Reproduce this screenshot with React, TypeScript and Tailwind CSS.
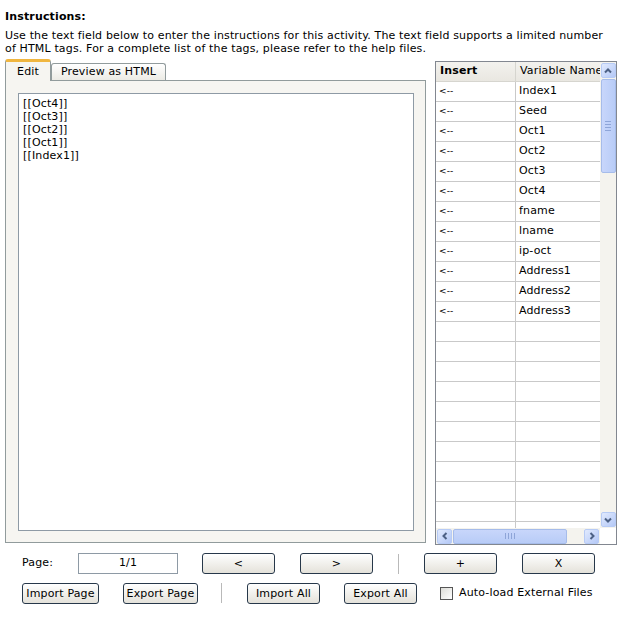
import React from 'react';

const variables = [
  'Index1',
  'Seed',
  'Oct1',
  'Oct2',
  'Oct3',
  'Oct4',
  'fname',
  'lname',
  'ip-oct',
  'Address1',
  'Address2',
  'Address3',
];

const editorLines = ['[[Oct4]]', '[[Oct3]]', '[[Oct2]]', '[[Oct1]]', '[[Index1]]'];

function Chevron({ dir }: { dir: 'up' | 'down' | 'left' | 'right' }) {
  const paths: Record<string, string> = {
    up: 'M2 6.5 L5 3.5 L8 6.5',
    down: 'M2 3.5 L5 6.5 L8 3.5',
    left: 'M6.5 2 L3.5 5 L6.5 8',
    right: 'M3.5 2 L6.5 5 L3.5 8',
  };
  return (
    <svg width="10" height="10" viewBox="0 0 10 10">
      <path d={paths[dir]} fill="none" stroke="#4d6185" strokeWidth={2} />
    </svg>
  );
}

function ScrollArrow({ dir }: { dir: 'up' | 'down' | 'left' | 'right' }) {
  return (
    <div className="w-[15px] h-[15px] flex items-center justify-center rounded-[2px] border border-[#b7cbf5] bg-gradient-to-br from-[#e1eafe] to-[#b4c8f6]">
      <Chevron dir={dir} />
    </div>
  );
}

function Button({ label, width }: { label: string; width: string }) {
  return (
    <button
      className={`${width} h-[21px] flex items-center justify-center rounded-[3px] border border-[#27384a] bg-gradient-to-b from-white to-[#e4e2da] text-[11px] text-black leading-none tracking-[0.15px]`}
    >
      {label}
    </button>
  );
}

export default function App() {
  const emptyRows = Array.from({ length: 12 });

  return (
    <div
      className="w-[624px] h-[629px] bg-white text-black text-[11px] tracking-[0.15px] overflow-hidden"
      style={{ fontFamily: '"DejaVu Sans", Verdana, sans-serif' }}
    >
      {/* Header */}
      <div className="pl-[5px] pt-[10px]">
        <div className="font-bold leading-[13px]">Instructions:</div>
        <p className="mt-[6px] leading-[13px] w-[618px] whitespace-nowrap">
          Use the text field below to enter the instructions for this activity. The text field supports a limited number
          <br />
          of HTML tags. For a complete list of the tags, please refer to the help files.
        </p>
      </div>

      {/* Main area */}
      <div className="flex items-start pl-[5px] mt-[4px]">
        {/* Editor with tabs */}
        <div className="w-[421px] flex flex-col">
          <div className="flex items-end h-[21px]">
            <div className="relative z-10 w-[46px] h-[22px] -mb-[1px] rounded-t-[3px] border border-b-0 border-[#919b9c] border-t-[3px] border-t-[#f0b640] bg-[#f6f5f1] flex items-center justify-center pt-[1px]">
              Edit
            </div>
            <div className="w-[115px] h-[17px] rounded-t-[3px] border border-b-0 border-[#919b9c] bg-gradient-to-b from-white to-[#ecebe5] flex items-center justify-center">
              Preview as HTML
            </div>
          </div>
          <div className="h-[463px] border border-[#919b9c] bg-[#f6f5f1] pl-[12px] pt-[12px]">
            <div className="w-[396px] h-[438px] bg-white border border-[#8e9aa5] pl-[4px] pt-[3px] leading-[13px]">
              {editorLines.map((line) => (
                <div key={line}>{line}</div>
              ))}
            </div>
          </div>
        </div>

        {/* Variables table */}
        <div className="ml-[9px] mt-[2px] w-[182px] h-[484px] border border-[#828790] flex flex-col bg-white">
          <div className="flex h-[466px]">
            <div className="w-[164px] overflow-hidden">
              <div className="flex h-[20px] bg-gradient-to-b from-[#f3f2ee] to-[#e9e7e1] border-b border-[#d6d5cf]">
                <div className="w-[80px] border-r border-[#d6d5cf] pl-[4px] flex items-center font-bold">Insert</div>
                <div className="w-[84px] pl-[4px] flex items-center whitespace-nowrap overflow-hidden">Variable Name</div>
              </div>
              {variables.map((v) => (
                <div key={v} className="flex h-[20px] border-b border-[#c9c9c9]">
                  <div className="w-[80px] border-r border-[#c9c9c9] pl-[3px] flex items-center text-[9px]">&lt;--</div>
                  <div className="w-[84px] pl-[3px] flex items-center">{v}</div>
                </div>
              ))}
              {emptyRows.map((_, i) => (
                <div key={i} className="flex h-[20px] border-b border-[#c9c9c9]">
                  <div className="w-[80px] border-r border-[#c9c9c9]" />
                  <div className="w-[84px]" />
                </div>
              ))}
            </div>
            {/* Vertical scrollbar */}
            <div className="w-[16px] bg-[#f4f3ee] flex flex-col items-center pt-[1px] pb-[1px]">
              <ScrollArrow dir="up" />
              <div className="mt-[1px] w-[15px] h-[94px] rounded-[2px] border border-[#a6bcea] bg-gradient-to-r from-[#c8d6fb] to-[#b8ccf7] flex flex-col items-center justify-center gap-[2px]">
                <div className="w-[6px] h-[1px] bg-[#8ea5d8]" />
                <div className="w-[6px] h-[1px] bg-[#8ea5d8]" />
                <div className="w-[6px] h-[1px] bg-[#8ea5d8]" />
                <div className="w-[6px] h-[1px] bg-[#8ea5d8]" />
              </div>
              <div className="flex-1" />
              <ScrollArrow dir="down" />
            </div>
          </div>
          {/* Horizontal scrollbar */}
          <div className="flex h-[16px]">
            <div className="w-[164px] bg-[#f4f3ee] flex items-center pl-[1px] pr-[1px]">
              <ScrollArrow dir="left" />
              <div className="ml-[1px] w-[114px] h-[15px] rounded-[2px] border border-[#a6bcea] bg-gradient-to-b from-[#c8d6fb] to-[#b8ccf7] flex items-center justify-center gap-[2px]">
                <div className="w-[1px] h-[6px] bg-[#8ea5d8]" />
                <div className="w-[1px] h-[6px] bg-[#8ea5d8]" />
                <div className="w-[1px] h-[6px] bg-[#8ea5d8]" />
                <div className="w-[1px] h-[6px] bg-[#8ea5d8]" />
              </div>
              <div className="flex-1" />
              <ScrollArrow dir="right" />
            </div>
            <div className="w-[16px] bg-white" />
          </div>
        </div>
      </div>

      {/* Page controls */}
      <div className="flex items-center mt-[8px] h-[21px]">
        <div className="ml-[22px] w-[56px]">Page:</div>
        <div className="w-[100px] h-[21px] border border-[#8e9aa5] flex items-center justify-center">1/1</div>
        <div className="ml-[24px]">
          <Button label="<" width="w-[73px]" />
        </div>
        <div className="ml-[25px]">
          <Button label=">" width="w-[73px]" />
        </div>
        <div className="ml-[25px] w-[1px] h-[20px] bg-[#b9b9b9]" />
        <div className="ml-[25px]">
          <Button label="+" width="w-[73px]" />
        </div>
        <div className="ml-[25px]">
          <Button label="X" width="w-[73px]" />
        </div>
      </div>

      {/* Import / export */}
      <div className="flex items-center mt-[8px] h-[22px]">
        <div className="ml-[22px]">
          <Button label="Import Page" width="w-[77px]" />
        </div>
        <div className="ml-[24px]">
          <Button label="Export Page" width="w-[75px]" />
        </div>
        <div className="ml-[23px] w-[1px] h-[20px] bg-[#b9b9b9]" />
        <div className="ml-[25px]">
          <Button label="Import All" width="w-[73px]" />
        </div>
        <div className="ml-[24px]">
          <Button label="Export All" width="w-[73px]" />
        </div>
        <div className="ml-[23px] w-[13px] h-[13px] border border-[#555] bg-gradient-to-br from-[#dcdcd7] to-white" />
        <div className="ml-[6px]">Auto-load External Files</div>
      </div>
    </div>
  );
}
